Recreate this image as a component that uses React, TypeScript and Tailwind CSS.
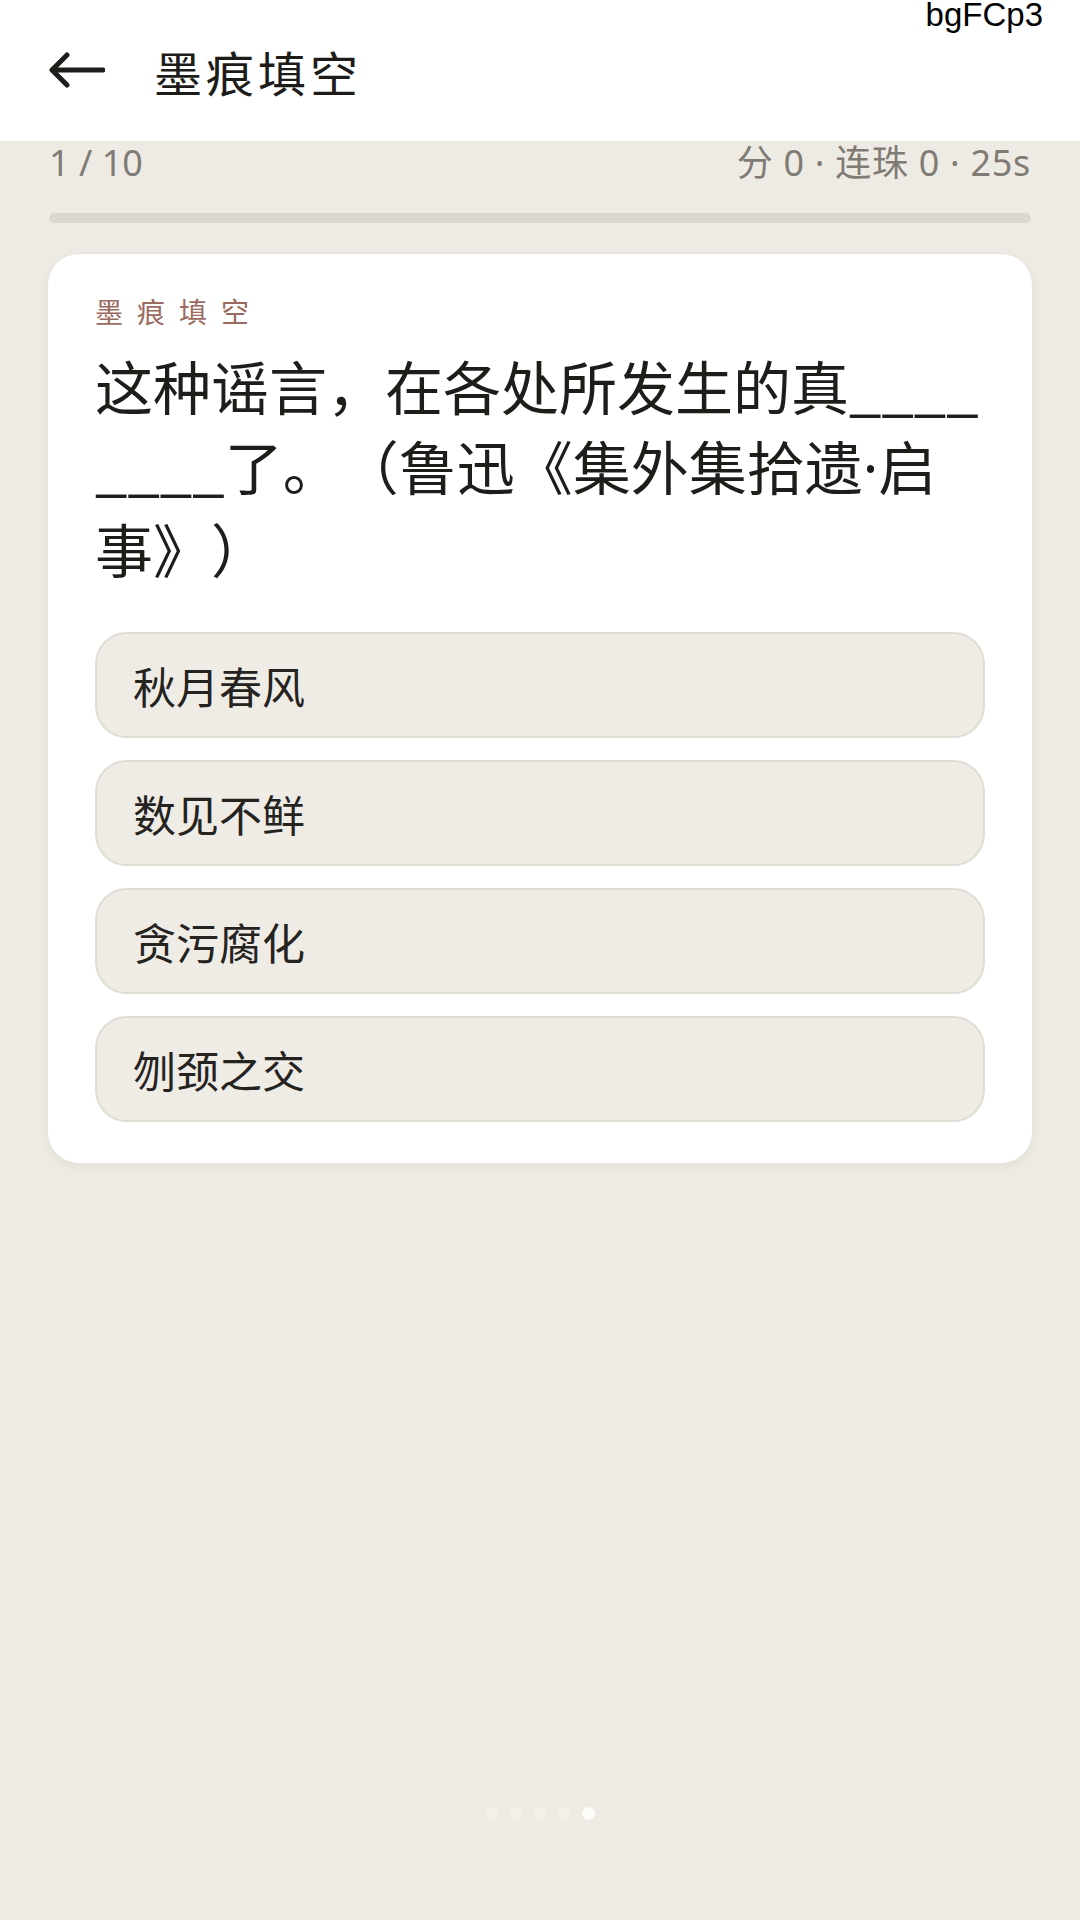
import React from "react";

const options = ["秋月春风", "数见不鲜", "贪污腐化", "刎颈之交"];

export default function App() {
  return (
    <div
      className="relative flex h-[1920px] w-[1080px] flex-col overflow-hidden bg-[#eeebe4]"
      style={{ fontFamily: '"Noto Sans", "Noto Sans CJK SC", sans-serif' }}
    >
      <div className="absolute right-[37px] top-[-2px] text-[33px] leading-none text-black" style={{ fontFamily: '"Liberation Sans", Arial, sans-serif' }}>
        bgFCp3
      </div>

      <header className="flex h-[141px] shrink-0 items-center bg-white pl-[49px] shadow-[0_1px_2px_rgba(0,0,0,0.04)]">
        <svg width="56" height="36" viewBox="0 0 56 36" className="mt-[-2px] shrink-0">
          <path d="M54 18H4M18 3L3 18l15 15" fill="none" stroke="#1f1d1a" strokeWidth="5" strokeLinecap="round" strokeLinejoin="round" />
        </svg>
        <h1 className="ml-[49px] text-[48px] leading-none tracking-[4px] text-[#1e1c19]" style={{ fontFamily: '"Noto Sans CJK SC", sans-serif' }}>
          墨痕填空
        </h1>
      </header>

      <main className="flex flex-col px-[47px]">
        <div className="flex items-center justify-between px-[2px] pt-[4px] text-[36px] leading-none text-[#807b75]">
          <span>1 / 10</span>
          <span className="tracking-[0.7px]">分 0 · 连珠 0 · 25s</span>
        </div>

        <div className="mx-[2px] mt-[32px] h-[10px] rounded-full bg-[#dcd8ce]" />

        <section className="mt-[30px] rounded-[32px] border border-[#e9e5dd] bg-white px-[47px] pb-[41px] pt-[43px] shadow-[0_3px_10px_rgba(0,0,0,0.05)]" style={{ fontFamily: '"Noto Sans CJK SC", sans-serif' }}>
          <div className="text-[28px] leading-[28px] tracking-[14px] text-[#9b6a61]">墨痕填空</div>
          <p className="mt-[20px] text-[58px] font-normal leading-[80px] text-[#1f1d1a] [text-spacing-trim:space-all]">
            这种谣言，在各处所发生的真____{"\u200B"}____了。（鲁迅《集外集拾遗<span style={{ fontFamily: '"Noto Sans", sans-serif' }}>·</span>启事》）
          </p>
          <div className="mt-[44px] flex flex-col gap-[22px]">
            {options.map((o) => (
              <button
                key={o}
                className="flex h-[106px] items-center rounded-[32px] border-2 border-[#e0ddd5] bg-[#efece5] pl-[36px] text-left text-[43px] leading-none text-[#25231f]"
              >
                {o}
              </button>
            ))}
          </div>
        </section>
      </main>

      <div className="flex-1" />

      <div className="mb-[100px] flex items-center justify-center gap-[11px]">
        <span className="h-[13px] w-[13px] rounded-full bg-[#f3f0ea] blur-[1px]" />
        <span className="h-[13px] w-[13px] rounded-full bg-[#f3f0ea] blur-[1px]" />
        <span className="h-[13px] w-[13px] rounded-full bg-[#f3f0ea] blur-[1px]" />
        <span className="h-[13px] w-[13px] rounded-full bg-[#f3f0ea] blur-[1px]" />
        <span className="h-[13px] w-[13px] rounded-full bg-[#fdfcf8]" />
      </div>
    </div>
  );
}
